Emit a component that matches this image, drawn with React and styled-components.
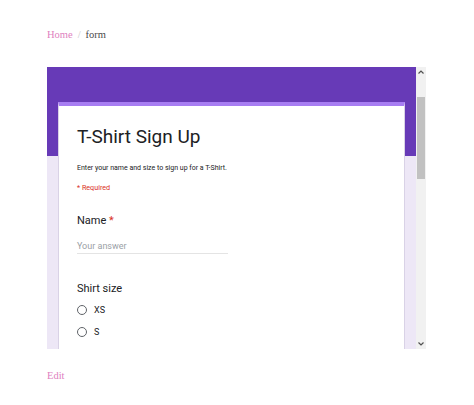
import styled, { createGlobalStyle } from "styled-components";

const GlobalStyle = createGlobalStyle`
  html, body {
    margin: 0;
    padding: 0;
    background: #ffffff;
  }
  * {
    box-sizing: border-box;
  }
`;

const Page = styled.div`
  padding: 29px 0 0 47px;
  font-family: "Liberation Serif", "DejaVu Serif", serif;
`;

const Crumbs = styled.div`
  display: flex;
  align-items: center;
  gap: 5px;
  font-size: 10.5px;
  line-height: 12px;
  height: 12px;
`;

const CrumbLink = styled.a`
  color: #e07fc0;
  text-decoration: none;
`;

const CrumbSep = styled.span`
  color: #c8c8c8;
`;

const CrumbCurrent = styled.span`
  color: #4a4a4a;
`;

const Frame = styled.div`
  margin-top: 26px;
  width: 379px;
  height: 282px;
  display: flex;
`;

const Viewport = styled.div`
  flex: 1;
  overflow: hidden;
  background: #ede7f6;
  font-family: Roboto, "Noto Sans", sans-serif;
`;

const HeaderBand = styled.div`
  height: 89px;
  background: #673ab7;
`;

const Card = styled.div`
  margin: -54px 11px 0;
  background: #ffffff;
  border-top: 4px solid #a77df2;
  border-left: 1px solid #d9d2e6;
  border-right: 1px solid #d9d2e6;
  padding: 19px 18px 0;
`;

const Title = styled.h1`
  margin: 0;
  font-size: 19px;
  line-height: 24px;
  font-weight: 400;
  color: #202124;
`;

const Description = styled.p`
  margin: 14px 0 0;
  font-size: 7px;
  line-height: 10px;
  color: #202124;
`;

const RequiredNote = styled.p`
  margin: 10px 0 0;
  font-size: 7.2px;
  line-height: 10px;
  color: #d93025;
`;

const Question = styled.div`
  margin-top: ${(p) => p.$gap}px;
  font-size: 11px;
  line-height: 14px;
  color: #202124;
`;

const Star = styled.span`
  color: #d93025;
`;

const AnswerLine = styled.div`
  margin-top: 12px;
  width: 151px;
  font-size: 9px;
  line-height: 12px;
  color: #9aa0a6;
  padding-bottom: 1px;
  border-bottom: 1px solid #e4e4e4;
`;

const Options = styled.div`
  margin-top: 3px;
  display: flex;
  flex-direction: column;
`;

const Option = styled.label`
  height: 22px;
  display: flex;
  align-items: center;
  gap: 7px;
  font-size: 9px;
  color: #202124;
`;

const Radio = styled.span`
  width: 10px;
  height: 10px;
  border-radius: 50%;
  border: 1.3px solid #5f6368;
  flex-shrink: 0;
`;

const ScrollBar = styled.div`
  width: 10px;
  background: #f1f1f1;
  display: flex;
  flex-direction: column;
  align-items: center;
`;

const ArrowButton = styled.div`
  height: 10px;
  width: 100%;
  display: flex;
  align-items: center;
  justify-content: center;
`;

const Track = styled.div`
  flex: 1;
  width: 100%;
  padding-top: 20px;
`;

const Thumb = styled.div`
  margin: 0 1px;
  height: 82px;
  background: #c1c1c1;
`;

const EditLink = styled.a`
  display: block;
  margin-top: 21px;
  font-size: 10.5px;
  line-height: 12px;
  color: #e07fc0;
  text-decoration: none;
`;

const Chevron = ({ up }) => (
  <svg width="6" height="4" viewBox="0 0 6 4">
    <path
      d={up ? "M0.5 3.5 L3 1 L5.5 3.5" : "M0.5 0.5 L3 3 L5.5 0.5"}
      fill="none"
      stroke="#505050"
      strokeWidth="1.2"
    />
  </svg>
);

const sizes = ["XS", "S", "M"];

export default function App() {
  return (
    <Page>
      <GlobalStyle />
      <Crumbs>
        <CrumbLink href="#">Home</CrumbLink>
        <CrumbSep>/</CrumbSep>
        <CrumbCurrent>form</CrumbCurrent>
      </Crumbs>
      <Frame>
        <Viewport>
          <HeaderBand />
          <Card>
            <Title>T-Shirt Sign Up</Title>
            <Description>
              Enter your name and size to sign up for a T-Shirt.
            </Description>
            <RequiredNote>* Required</RequiredNote>
            <Question $gap={21}>
              Name <Star>*</Star>
            </Question>
            <AnswerLine>Your answer</AnswerLine>
            <Question $gap={28}>Shirt size</Question>
            <Options>
              {sizes.map((s) => (
                <Option key={s}>
                  <Radio />
                  {s}
                </Option>
              ))}
            </Options>
          </Card>
        </Viewport>
        <ScrollBar>
          <ArrowButton>
            <Chevron up />
          </ArrowButton>
          <Track>
            <Thumb />
          </Track>
          <ArrowButton>
            <Chevron />
          </ArrowButton>
        </ScrollBar>
      </Frame>
      <EditLink href="#">Edit</EditLink>
    </Page>
  );
}
